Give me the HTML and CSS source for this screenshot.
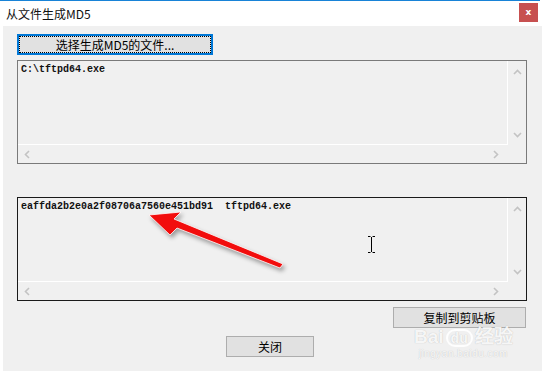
FILE: index.html
```html
<!DOCTYPE html>
<html lang="zh-CN">

<head>
    <meta charset="UTF-8">
    <meta name="viewport" content="width=device-width, initial-scale=1.0">
    <link rel="stylesheet" href="styles.css">
    <title>从文件生成MD5</title>
</head>

<body>
    <div class="window">
        <div class="titlebar">
            <span class="title">从文件生成MD5</span>
            <div class="close-x">x</div>
        </div>

        <div class="client">
            <div class="btn btn-pick">
                <div class="focus">选择生成MD5的文件...</div>
            </div>

            <div class="listbox list-files">
                <div class="list-text">C:\tftpd64.exe</div>
                <div class="vscroll">
                    <svg width="9" height="6" viewBox="0 0 9 6"><path d="M1 5 L4.5 1.5 L8 5" /></svg>
                    <svg width="9" height="6" viewBox="0 0 9 6"><path d="M1 1 L4.5 4.5 L8 1" /></svg>
                </div>
                <div class="hscroll">
                    <svg width="6" height="9" viewBox="0 0 6 9"><path d="M5 1 L1.5 4.5 L5 8" /></svg>
                    <svg width="6" height="9" viewBox="0 0 6 9"><path d="M1 1 L4.5 4.5 L1 8" /></svg>
                </div>
                <div class="corner"></div>
            </div>

            <div class="listbox list-result">
                <div class="list-text">eaffda2b2e0a2f08706a7560e451bd91&nbsp;&nbsp;tftpd64.exe</div>
                <div class="vscroll">
                    <svg width="9" height="6" viewBox="0 0 9 6"><path d="M1 5 L4.5 1.5 L8 5" /></svg>
                    <svg width="9" height="6" viewBox="0 0 9 6"><path d="M1 1 L4.5 4.5 L8 1" /></svg>
                </div>
                <div class="hscroll">
                    <svg width="6" height="9" viewBox="0 0 6 9"><path d="M5 1 L1.5 4.5 L5 8" /></svg>
                    <svg width="6" height="9" viewBox="0 0 6 9"><path d="M1 1 L4.5 4.5 L1 8" /></svg>
                </div>
                <div class="corner"></div>
            </div>

            <div class="btn btn-copy">复制到剪贴板</div>
            <div class="btn btn-close">关闭</div>
        </div>
    </div>

    <!-- annotation arrow drawn over the screenshot -->
    <svg class="arrow" width="542" height="375" viewBox="0 0 542 375">
        <polygon points="149,215 181,212 174,219 283,264 280,268 177,228 170,235"
            fill="#f20d0d" stroke="#ffffff" stroke-width="0.8" stroke-linejoin="round" />
    </svg>

    <svg class="ibeam" width="9" height="17" viewBox="0 0 9 17">
        <path d="M1 0.5 H3.5 M5.5 0.5 H8 M4.5 1 V16 M1 16.5 H3.5 M5.5 16.5 H8" stroke="#000" stroke-width="1" fill="none" />
    </svg>

    <div class="watermark">
        <div class="wm-logo">Bai<span class="wm-paw">du</span>经验</div>
        <div class="wm-url">jingyan.baidu.com</div>
    </div>
</body>

</html>
```

FILE: styles.css
```css
body {
    margin: 0;
    background: white;
    font-family: "Noto Sans CJK SC", "Noto Sans", sans-serif;
    font-size: 12px;
    color: black;
    width: 542px;
    height: 375px;
    overflow: hidden;
}

.window {
    border-top: 1px solid #1883d7;
    margin-right: 2px;
}

.titlebar {
    height: 25px;
    display: flex;
    align-items: flex-start;
    justify-content: space-between;
    background: white;
}

.title {
    margin-left: 6px;
    margin-top: 4px;
    font-size: 12px;
    line-height: 17px;
    color: #111;
}

.close-x {
    width: 19px;
    height: 19px;
    margin-top: 2px;
    margin-right: 2px;
    background: #c75050;
    color: white;
    font-family: "DejaVu Sans", sans-serif;
    font-weight: bold;
    font-size: 9px;
    line-height: 18px;
    text-align: center;
}

.client {
    background: #f0f0f0;
    margin-left: 3px;
    margin-right: -2px;
    padding: 8px 0 14px 14px;
    height: 323px;
    display: flex;
    flex-direction: column;
    align-items: flex-start;
}

.btn {
    box-sizing: border-box;
    height: 21px;
    background: #e1e1e1;
    border: 1px solid #adadad;
    text-align: center;
    line-height: 19px;
    font-size: 12px;
}

.btn-pick {
    width: 196px;
    border: 2px solid #0078d7;
    padding: 0;
}

.btn-pick .focus {
    height: 17px;
    line-height: 16px;
    border: 1px dotted #000;
    box-sizing: border-box;
}

.listbox {
    box-sizing: border-box;
    width: 510px;
    height: 104px;
    border: 1px solid #7a7a7a;
    display: grid;
    grid-template-columns: 1fr 18px;
    grid-template-rows: 1fr 18px;
}

.list-files {
    margin-top: 5px;
}

.list-result {
    margin-top: 33px;
    border-color: #1a1a1a;
}

.list-text {
    border-right: 1px solid white;
    border-bottom: 1px solid white;
    padding: 3px 3px;
    font-family: "Liberation Mono", monospace;
    font-weight: bold;
    font-size: 10px;
    line-height: 12px;
    color: #111;
    white-space: nowrap;
}

.vscroll {
    display: flex;
    flex-direction: column;
    justify-content: space-between;
    align-items: center;
    padding: 8px 0 7px;
}

.hscroll {
    display: flex;
    justify-content: space-between;
    align-items: center;
    padding: 0 9px 0 6px;
}

.vscroll path,
.hscroll path {
    fill: none;
    stroke: #c3c3c3;
    stroke-width: 1.6;
}

.btn-copy {
    width: 133px;
    margin-top: 6px;
    margin-left: 376px;
}

.btn-close {
    width: 88px;
    margin-top: 8px;
    margin-left: 209px;
}

.arrow {
    position: absolute;
    left: 0;
    top: 0;
    filter: drop-shadow(2px 3px 2px rgba(0, 0, 0, 0.35));
}

.ibeam {
    position: absolute;
    left: 367px;
    top: 236px;
}

.watermark {
    position: absolute;
    left: 414px;
    top: 326px;
    color: rgba(255, 255, 255, 0.9);
    text-shadow: 0 0 1px rgba(0, 0, 0, 0.25);
    text-align: center;
}

.wm-logo {
    font-family: "Liberation Sans", sans-serif;
    font-weight: bold;
    font-size: 19px;
    line-height: 22px;
}

.wm-paw {
    display: inline-block;
    margin: 0 2px;
    padding: 0 3px;
    border-radius: 10px;
    border: 2px solid rgba(255, 255, 255, 0.9);
    font-size: 14px;
    line-height: 14px;
}

.wm-url {
    font-family: "Liberation Sans", sans-serif;
    font-size: 10px;
    line-height: 12px;
    letter-spacing: 0.5px;
}
```
